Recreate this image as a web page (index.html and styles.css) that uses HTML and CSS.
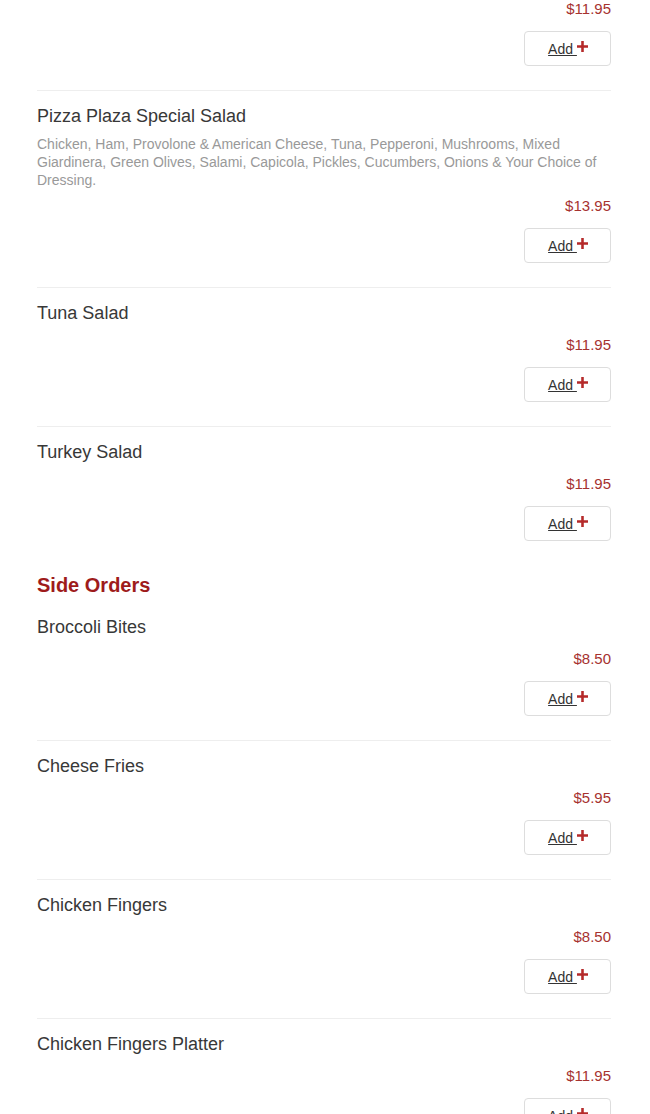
FILE: index.html
```html
<!DOCTYPE html>
<html>
<head>
<meta charset="utf-8">
<link rel="stylesheet" href="styles.css">
</head>
<body>
<div class="menu">
  <div class="item item-first">
    <div class="price">$11.95</div>
    <div class="actions"><a class="add-btn"><span class="add-label">Add </span><svg class="plus" viewBox="0 0 12 12"><path d="M4.6 0h2.8v4.6H12v2.8H7.4V12H4.6V7.4H0V4.6h4.6z"/></svg></a></div>
  </div>
  <div class="item">
    <div class="title">Pizza Plaza Special Salad</div>
    <div class="desc">Chicken, Ham, Provolone &amp; American Cheese, Tuna, Pepperoni, Mushrooms, Mixed Giardinera, Green Olives, Salami, Capicola, Pickles, Cucumbers, Onions &amp; Your Choice of Dressing.</div>
    <div class="price price-after-desc">$13.95</div>
    <div class="actions"><a class="add-btn"><span class="add-label">Add </span><svg class="plus" viewBox="0 0 12 12"><path d="M4.6 0h2.8v4.6H12v2.8H7.4V12H4.6V7.4H0V4.6h4.6z"/></svg></a></div>
  </div>
  <div class="item">
    <div class="title">Tuna Salad</div>
    <div class="price">$11.95</div>
    <div class="actions"><a class="add-btn"><span class="add-label">Add </span><svg class="plus" viewBox="0 0 12 12"><path d="M4.6 0h2.8v4.6H12v2.8H7.4V12H4.6V7.4H0V4.6h4.6z"/></svg></a></div>
  </div>
  <div class="item">
    <div class="title">Turkey Salad</div>
    <div class="price">$11.95</div>
    <div class="actions"><a class="add-btn"><span class="add-label">Add </span><svg class="plus" viewBox="0 0 12 12"><path d="M4.6 0h2.8v4.6H12v2.8H7.4V12H4.6V7.4H0V4.6h4.6z"/></svg></a></div>
  </div>
  <h2 class="section">Side Orders</h2>
  <div class="item item-nodiv">
    <div class="title">Broccoli Bites</div>
    <div class="price">$8.50</div>
    <div class="actions"><a class="add-btn"><span class="add-label">Add </span><svg class="plus" viewBox="0 0 12 12"><path d="M4.6 0h2.8v4.6H12v2.8H7.4V12H4.6V7.4H0V4.6h4.6z"/></svg></a></div>
  </div>
  <div class="item">
    <div class="title">Cheese Fries</div>
    <div class="price">$5.95</div>
    <div class="actions"><a class="add-btn"><span class="add-label">Add </span><svg class="plus" viewBox="0 0 12 12"><path d="M4.6 0h2.8v4.6H12v2.8H7.4V12H4.6V7.4H0V4.6h4.6z"/></svg></a></div>
  </div>
  <div class="item">
    <div class="title">Chicken Fingers</div>
    <div class="price">$8.50</div>
    <div class="actions"><a class="add-btn"><span class="add-label">Add </span><svg class="plus" viewBox="0 0 12 12"><path d="M4.6 0h2.8v4.6H12v2.8H7.4V12H4.6V7.4H0V4.6h4.6z"/></svg></a></div>
  </div>
  <div class="item">
    <div class="title">Chicken Fingers Platter</div>
    <div class="price">$11.95</div>
    <div class="actions"><a class="add-btn"><span class="add-label">Add </span><svg class="plus" viewBox="0 0 12 12"><path d="M4.6 0h2.8v4.6H12v2.8H7.4V12H4.6V7.4H0V4.6h4.6z"/></svg></a></div>
  </div>
</div>
</body>
</html>
```

FILE: styles.css
```css
html, body {
  margin: 0;
  padding: 0;
  background: #fff;
}
body {
  font-family: "Liberation Sans", Arial, sans-serif;
  color: #333;
}
.menu {
  width: 574px;
  margin-left: 37px;
  display: flex;
  flex-direction: column;
}
.item {
  display: flex;
  flex-direction: column;
  padding: 14px 0 24px;
  border-top: 1px solid #eee;
}
.item-first {
  border-top: none;
  padding-top: 0;
  padding-bottom: 24px;
}
.item-nodiv {
  border-top: none;
}
.title {
  font-size: 18px;
  line-height: 22px;
  color: #383838;
}
.desc {
  margin-top: 8px;
  font-size: 14px;
  line-height: 18px;
  color: #999;
}
.price {
  margin-top: 12px;
  text-align: right;
  font-size: 15px;
  line-height: 18px;
  color: #a6322f;
}
.item-first .price {
  margin-top: 0;
}
.price-after-desc {
  margin-top: 8px;
}
.actions {
  display: flex;
  justify-content: flex-end;
  margin-top: 13px;
}
.add-btn {
  box-sizing: border-box;
  width: 87px;
  height: 35px;
  border: 1px solid #ddd;
  border-radius: 4px;
  display: flex;
  align-items: center;
  justify-content: center;
  padding-left: 1px;
  font-size: 14px;
  color: #333;
  background: #fff;
}
.add-label {
  text-decoration: underline;
  white-space: pre;
}
.plus {
  width: 11px;
  height: 11px;
  fill: #b52a2a;
  margin-top: -4px;
}
.section {
  margin: 8px 0 5px;
  font-size: 20px;
  line-height: 24px;
  font-weight: bold;
  color: #9e1b1b;
}
```
